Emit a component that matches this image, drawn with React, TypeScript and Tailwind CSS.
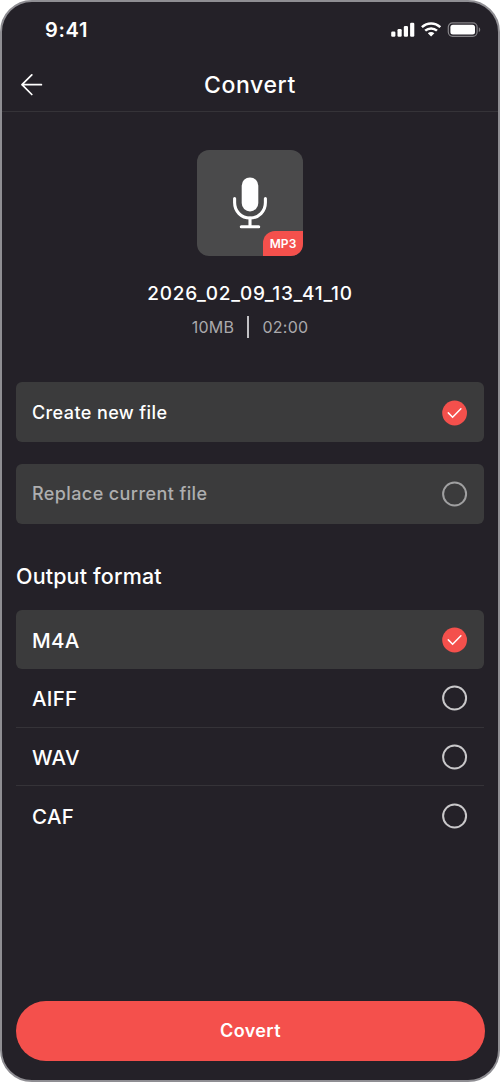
import { useState } from "react";

function Indicator({ checked, dim = false }: { checked: boolean; dim?: boolean }) {
  return (
    <svg className="block h-[26px] w-[26px] shrink-0" viewBox="0 0 26 26" fill="none" aria-hidden="true">
      {checked ? (
        <>
          <circle cx="12.6" cy="13" r="12.4" fill="#f4504c" />
          <path d="M6.3 12.9 10.6 17.2 18.9 8.8" stroke="#fff" strokeWidth="1.5" strokeLinecap="round" />
        </>
      ) : (
        <circle cx="12.6" cy="13" r="11.5" stroke={dim ? "#a0a0a1" : "#c9c8ca"} strokeWidth="2" />
      )}
    </svg>
  );
}

function StatusBar() {
  return (
    <div className="flex h-14 items-center pl-[43px] pr-[17px]">
      <span className="text-[20px] font-semibold leading-6 tracking-[0.7px]">9:41</span>
      <svg className="ml-auto block h-4 w-[90px]" viewBox="0 0 90 16" fill="none" aria-hidden="true">
        <g fill="#fff">
          <rect x="0.2" y="9.6" width="4.2" height="5.1" rx="1.2" />
          <rect x="6.5" y="7.1" width="4.2" height="7.6" rx="1.2" />
          <rect x="12.8" y="3.9" width="4.2" height="10.8" rx="1.2" />
          <rect x="19.1" y="0.7" width="4.2" height="14" rx="1.2" />
        </g>
        <g stroke="#fff" strokeWidth="2.5">
          <path d="M30.9 5.2C36.2 0.3 44 0.3 49.3 5.2" />
          <path d="M34.2 8.7C37.6 5.6 42.6 5.6 46 8.7" />
        </g>
        <path d="M40.1 14.5 36.8 11.3C38.7 9.7 41.5 9.7 43.4 11.3Z" fill="#fff" />
        <rect x="57.3" y="0.9" width="28.8" height="13.4" rx="4.2" stroke="#858387" strokeWidth="1.2" />
        <rect x="59.4" y="2.8" width="24.6" height="9.7" rx="2.5" fill="#fff" />
        <path d="M87.8 5.2C89.7 6.1 89.7 9.2 87.8 10Z" fill="#858387" />
      </svg>
    </div>
  );
}

function Option({ label, active, onSelect }: { label: string; active: boolean; onSelect: () => void }) {
  return (
    <button
      type="button"
      onClick={onSelect}
      className="flex h-[60px] w-full items-center justify-between rounded-md bg-[#3b3b3c] pt-[0.6px] pl-4 pr-4"
    >
      <span
        className={
          active
            ? "text-[18px] font-medium leading-6 tracking-[0.4px] text-white"
            : "text-[18px] font-medium leading-6 tracking-[0.4px] text-[#aeaeaf]"
        }
      >
        {label}
      </span>
      <Indicator checked={active} dim />
    </button>
  );
}

const formats = ["M4A", "AIFF", "WAV", "CAF"];

export default function App() {
  const [mode, setMode] = useState("Create new file");
  const [format, setFormat] = useState("M4A");

  return (
    <div className="h-[1082px] w-[500px] bg-white">
      <main className="flex h-full w-full flex-col overflow-hidden rounded-[32px] border-2 border-[#8f8e93] bg-[#242128] font-['Inter',sans-serif] text-white">
        <StatusBar />
        <header className="grid h-[54px] grid-cols-[60px_1fr_60px] items-center border-b border-[#353338]">
          <button type="button" aria-label="Back" className="pl-[19px]">
            <svg className="block h-[22px] w-[22px]" viewBox="0 0 22 22" fill="none" stroke="#fff" strokeWidth="1.7" strokeLinecap="round" strokeLinejoin="round">
              <path d="M10.8 0.9 1 10.7 10.8 20.5M1 10.7H20.4" />
            </svg>
          </button>
          <h1 className="text-center text-[23px] font-medium leading-7 tracking-[0.6px]">Convert</h1>
        </header>

        <section className="flex flex-col items-center pt-[38px]">
          <div className="flex h-[106px] w-[106px] flex-col items-center overflow-hidden rounded-xl bg-[#4a4a4b]">
            <svg className="mt-[26px] block h-[54px] w-9 shrink-0" viewBox="0 0 36 54" fill="none" stroke="#fff" strokeLinecap="round" aria-hidden="true">
              <rect x="9.7" y="1.4" width="16.6" height="34" rx="8.3" fill="#fff" stroke="none" />
              <path d="M2.6 22.5V26.5C2.6 35.4 9.2 42 18 42S33.4 35.4 33.4 26.5V22.5" strokeWidth="3.1" />
              <path d="M18 42V50.7M9.3 50.7H26.7" strokeWidth="3.1" />
            </svg>
            <span className="mt-px flex h-[25px] w-10 shrink-0 items-center justify-center self-end rounded-tl-xl bg-[#f4504c] text-[12px] font-semibold leading-4 tracking-[0.1px]">
              MP3
            </span>
          </div>
          <p className="mt-[26px] text-[19px] font-medium leading-6 tracking-[0.75px]">2026_02_09_13_41_10</p>
          <div className="mt-[9px] flex h-6 items-center text-[16px] leading-6 tracking-[0.2px] text-[#aaa9ac]">
            <span>10MB</span>
            <span className="ml-[13px] mr-[14px] h-[22px] w-[1.5px] bg-[#c2c1c4]" />
            <span>02:00</span>
          </div>
        </section>

        <section className="mt-[43.3px] flex flex-col gap-[21.5px] px-3.5">
          {["Create new file", "Replace current file"].map((label) => (
            <Option key={label} label={label} active={mode === label} onSelect={() => setMode(label)} />
          ))}
        </section>

        <section className="mt-[38px] px-3.5">
          <h2 className="text-[21.5px] font-medium leading-7 tracking-[0.15px]">Output format</h2>
          <div className="mt-[20.5px]">
            {formats.map((name, index) => (
              <button
                key={name}
                type="button"
                onClick={() => setFormat(name)}
                className={
                  format === name
                    ? "flex h-[59px] w-full items-center justify-between rounded-md bg-[#3b3b3c] px-4"
                    : index < formats.length - 1
                      ? "flex h-[58.5px] w-full items-center justify-between border-b border-[#353338] px-4"
                      : "flex h-[58.5px] w-full items-center justify-between px-4"
                }
              >
                <span className="pt-[2px] text-[20.5px] font-medium leading-7 tracking-[0.3px]">{name}</span>
                <Indicator checked={format === name} />
              </button>
            ))}
          </div>
        </section>

        <div className="mt-auto pb-[19px] pl-3.5 pr-[13px]">
          <button type="button" className="flex h-[60px] w-full items-center justify-center rounded-full bg-[#f4504c] text-[18px] font-semibold leading-6 tracking-[0.4px]">
            Covert
          </button>
        </div>
      </main>
    </div>
  );
}
